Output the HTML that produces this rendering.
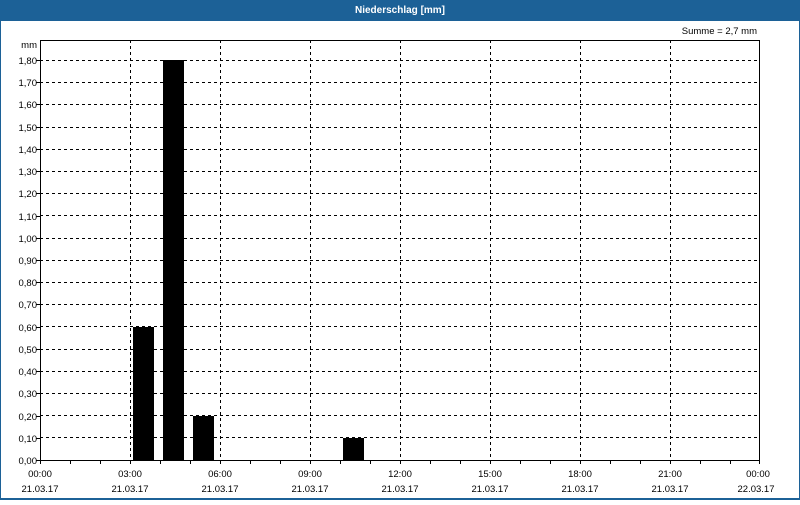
<!DOCTYPE html>
<html><head><style>
body{margin:0;width:800px;height:500px;overflow:hidden;background:#fff;font-family:"Liberation Sans",sans-serif;}
</style></head><body>
<svg width="800" height="500" xmlns="http://www.w3.org/2000/svg" font-family="Liberation Sans, sans-serif" font-size="9.5" fill="#000">
<rect x="0" y="0" width="800" height="500" fill="#fff"/>
<rect x="0" y="0" width="800" height="21" fill="#1c6197"/>
<rect x="0" y="0" width="1" height="500" fill="#1c6197"/>
<rect x="799" y="0" width="1" height="500" fill="#1c6197"/>
<rect x="0" y="498" width="800" height="2" fill="#1c6197"/>
<text x="400" y="13" text-anchor="middle" fill="#fff" font-weight="bold" font-size="10">Niederschlag [mm]</text>
<text x="757" y="34" text-anchor="end">Summe = 2,7 mm</text>
<text x="37" y="48" text-anchor="end">mm</text>
<g stroke="#000" stroke-width="1" stroke-dasharray="3,3" fill="none">
<path d="M40 437.5H760M40 415.5H760M40 393.5H760M40 371.5H760M40 349.5H760M40 326.5H760M40 304.5H760M40 282.5H760M40 260.5H760M40 238.5H760M40 215.5H760M40 193.5H760M40 171.5H760M40 149.5H760M40 127.5H760M40 104.5H760M40 82.5H760M40 60.5H760"/>
<path d="M130.5 40V460M220.5 40V460M310.5 40V460M400.5 40V460M490.5 40V460M580.5 40V460M670.5 40V460"/>
</g>
<g fill="#000">
<rect x="133" y="327" width="21" height="133"/>
<rect x="163" y="60" width="21" height="400"/>
<rect x="193" y="416" width="21" height="44"/>
<rect x="343" y="438" width="21" height="22"/>
</g>
<rect x="40.5" y="40.5" width="719" height="420" fill="none" stroke="#000"/>
<g stroke="#000">
<path d="M40.5 460v4M70.5 460v4M100.5 460v4M130.5 460v4M160.5 460v4M190.5 460v4M220.5 460v4M250.5 460v4M280.5 460v4M310.5 460v4M340.5 460v4M370.5 460v4M400.5 460v4M430.5 460v4M460.5 460v4M490.5 460v4M520.5 460v4M550.5 460v4M580.5 460v4M610.5 460v4M640.5 460v4M670.5 460v4M700.5 460v4M730.5 460v4M759.5 460v4"/>
<path d="M36 460.5h4M36 438.5h4M36 416.5h4M36 393.5h4M36 371.5h4M36 349.5h4M36 327.5h4M36 304.5h4M36 282.5h4M36 260.5h4M36 238.5h4M36 216.5h4M36 193.5h4M36 171.5h4M36 149.5h4M36 127.5h4M36 104.5h4M36 82.5h4M36 60.5h4"/>
</g>
<g text-anchor="end">
<text x="37" y="464">0,00</text><text x="37" y="442">0,10</text><text x="37" y="420">0,20</text><text x="37" y="397">0,30</text><text x="37" y="375">0,40</text><text x="37" y="353">0,50</text><text x="37" y="331">0,60</text><text x="37" y="308">0,70</text><text x="37" y="286">0,80</text><text x="37" y="264">0,90</text><text x="37" y="242">1,00</text><text x="37" y="220">1,10</text><text x="37" y="197">1,20</text><text x="37" y="175">1,30</text><text x="37" y="153">1,40</text><text x="37" y="131">1,50</text><text x="37" y="108">1,60</text><text x="37" y="86">1,70</text><text x="37" y="64">1,80</text>
</g>
<g text-anchor="middle">
<text x="40" y="477">00:00</text><text x="40" y="492">21.03.17</text>
<text x="130" y="477">03:00</text><text x="130" y="492">21.03.17</text>
<text x="220" y="477">06:00</text><text x="220" y="492">21.03.17</text>
<text x="310" y="477">09:00</text><text x="310" y="492">21.03.17</text>
<text x="400" y="477">12:00</text><text x="400" y="492">21.03.17</text>
<text x="490" y="477">15:00</text><text x="490" y="492">21.03.17</text>
<text x="580" y="477">18:00</text><text x="580" y="492">21.03.17</text>
<text x="670" y="477">21:00</text><text x="670" y="492">21.03.17</text>
<text x="758" y="477">00:00</text><text x="756" y="492">22.03.17</text>
</g>
</svg>
</body></html>
